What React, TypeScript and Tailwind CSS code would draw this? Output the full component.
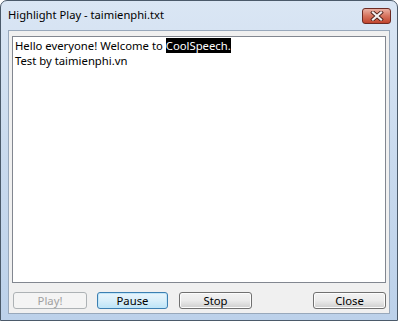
import React from 'react'

const font = { fontFamily: '"Segoe UI", "Noto Sans", "Liberation Sans", sans-serif' }

function Btn({ label, disabled, active, w }: { label: string; disabled?: boolean; active?: boolean; w: string }) {
  return (
    <div
      className={`${w} h-[17px] rounded-[3px] border flex items-center justify-center text-[11.3px] leading-none ${
        disabled
          ? 'border-[#adb2b5] bg-[#f4f4f4] text-[#a0a0a0]'
          : active
          ? 'border-[#3c7fb1] bg-gradient-to-b from-[#e9f5fc] via-[#d9effa] to-[#bde4f7] text-black shadow-[inset_0_0_0_1px_#c1e6f9]'
          : 'border-[#707070] bg-gradient-to-b from-[#f2f2f2] via-[#ebebeb] to-[#cfcfcf] text-black shadow-[inset_0_0_0_1px_#fcfcfc]'
      }`}
    >
      {label}
    </div>
  )
}

export default function App() {
  return (
    <div className="w-[398px] h-[321px] bg-white" style={font}>
      <div className="w-full h-full rounded-t-[7px] border border-[#4b5a6a] bg-gradient-to-b from-[#dae6f4] via-[#c9daee] to-[#bcd1ea] flex flex-col">
        {/* Title bar */}
        <div className="h-[29px] flex items-center justify-between pl-[7px] pr-[6px]">
          <span className="text-[11.2px] text-black">Highlight Play - taimienphi.txt</span>
          <div className="w-[29px] h-[16px] rounded-[3px] border border-[#6d2a22] bg-gradient-to-b from-[#eab0a3] via-[#d6735d] to-[#c1442d] flex items-center justify-center">
            <svg width="14" height="10" viewBox="0 0 14 10">
              <path d="M3 1.5 L11 8.5 M11 1.5 L3 8.5" stroke="#4a1d16" strokeWidth="3.8" strokeLinecap="square" />
              <path d="M3 1.5 L11 8.5 M11 1.5 L3 8.5" stroke="#f4f0f0" strokeWidth="2.2" strokeLinecap="square" />
            </svg>
          </div>
        </div>
        {/* Client */}
        <div className="flex-1 mx-[7px] mb-[6px] border border-[#98a8bb] bg-[#f0f0f0] flex flex-col px-[3px] pt-[5px]">
          <div className="h-[247px] border border-[#828790] bg-white px-[2px] pt-[1px] text-[11.3px] leading-[15px] text-black">
            <div>
              Hello everyone! Welcome to <span className="bg-black text-white">CoolSpeech.</span>
            </div>
            <div>Test by taimienphi.vn</div>
          </div>
          <div className="flex mt-[9px] pl-[1px]">
            <Btn label="Play!" disabled w="w-[74px]" />
            <div className="w-[10px]" />
            <Btn label="Pause" active w="w-[71px]" />
            <div className="w-[11px]" />
            <Btn label="Stop" w="w-[73px]" />
            <div className="flex-1" />
            <Btn label="Close" w="w-[73px]" />
          </div>
        </div>
      </div>
    </div>
  )
}
